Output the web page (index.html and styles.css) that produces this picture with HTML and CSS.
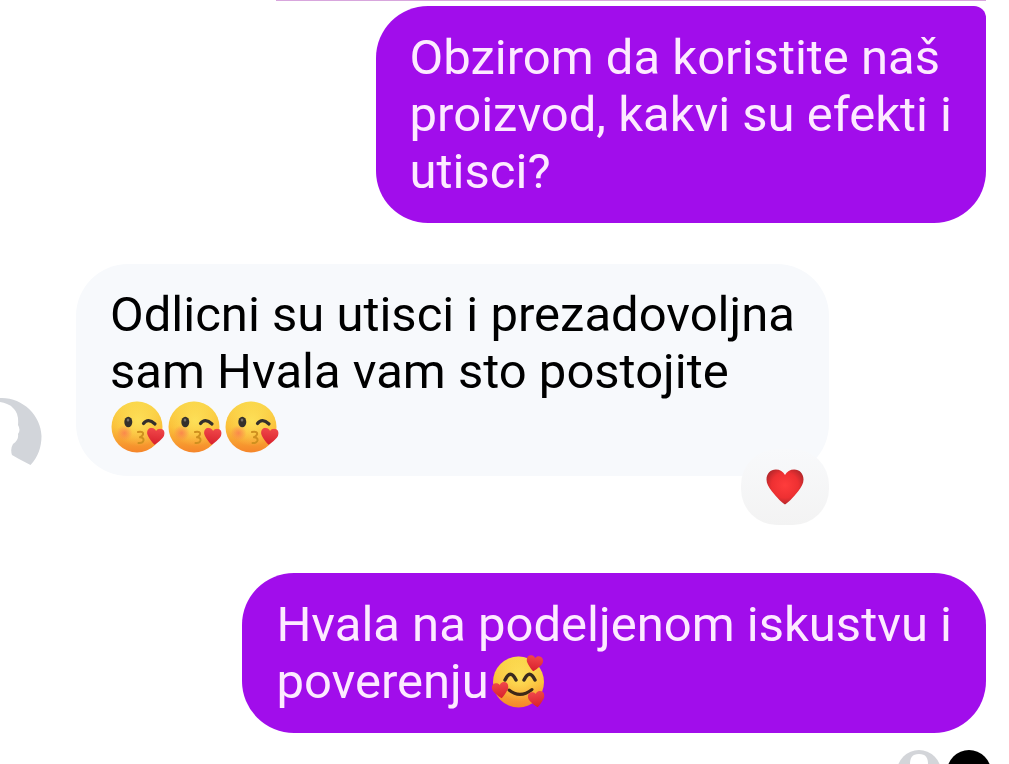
FILE: index.html
```
<!DOCTYPE html>
<html lang="sr">

<head>
    <meta charset="UTF-8">
    <meta name="viewport" content="width=device-width, initial-scale=1.0">
    <title>Chat</title>
    <link rel="stylesheet" href="styles.css">
</head>

<body>
    <!-- Emoji and gradients -->
    <svg class="defs" aria-hidden="true">
        <defs>
            <linearGradient id="face" x1="0" y1="0" x2="0" y2="1">
                <stop offset="0" stop-color="#f9d548" />
                <stop offset="0.5" stop-color="#fbc03a" />
                <stop offset="1" stop-color="#f5852a" />
            </linearGradient>
            <radialGradient id="glow" cx="0.52" cy="0.38" r="0.5">
                <stop offset="0" stop-color="#fde058" />
                <stop offset="1" stop-color="#fde058" stop-opacity="0" />
            </radialGradient>
            <radialGradient id="blush">
                <stop offset="0" stop-color="#fb7650" stop-opacity="0.75" />
                <stop offset="1" stop-color="#fb7650" stop-opacity="0" />
            </radialGradient>
            <radialGradient id="red" cx="0.5" cy="0.45" r="0.6">
                <stop offset="0" stop-color="#ff3c3c" />
                <stop offset="0.6" stop-color="#ee3032" />
                <stop offset="1" stop-color="#a8262a" />
            </radialGradient>
            <linearGradient id="small-red" x1="0" y1="0" x2="0" y2="1">
                <stop offset="0" stop-color="#f0484a" />
                <stop offset="1" stop-color="#d8202c" />
            </linearGradient>
            <symbol id="heart" viewBox="0 0 38 36">
                <path d="M19 35.500C16.500 34 11 29 6 22.500C2.500 18 .5 14.500 .5 10.500C.5 4.500 4.500 .5 9.800 .5C13.800 .5 17.300 2.500 19 6C20.700 2.500 24.200 .5 28.200 .5C33.500 .5 37.500 4.500 37.500 10.500C37.500 14.500 35.500 18 32 22.500C27 29 21.500 34 19 35.500Z" />
            </symbol>
            <symbol id="kiss" viewBox="0 0 57 57">
                <circle cx="27" cy="27" r="25.500" fill="url(#face)" />
                <circle cx="27" cy="27" r="25.500" fill="url(#glow)" />
                <circle cx="14.500" cy="33" r="8" fill="url(#blush)" />
                <ellipse cx="18.300" cy="22" rx="4" ry="5.200" fill="#34302c" />
                <ellipse cx="18" cy="20" rx="1.300" ry="1.500" fill="#77706a" />
                <path d="M33.500 23.500Q38 17.500 45 24" fill="none" stroke="#34302c" stroke-width="3.200" stroke-linecap="round" />
                <path d="M28 32Q34 31 33 34.500Q32 36.500 30 37.300Q34 37.800 33.500 40.500Q32.500 43.500 28.500 43" fill="none" stroke="#cf901f" stroke-width="2" stroke-linecap="round" stroke-linejoin="round" />
                <use href="#heart" x="36.500" y="28" width="18" height="17" fill="url(#small-red)" transform="rotate(6 45 36)" />
            </symbol>
            <symbol id="love" viewBox="0 0 57 57">
                <circle cx="29.500" cy="29" r="25.500" fill="url(#face)" />
                <circle cx="29.500" cy="29" r="25.500" fill="url(#glow)" />
                <path d="M16 27Q21.500 15.500 27 27M35 27Q40.500 15.500 46 27" fill="none" stroke="#3a2b20" stroke-width="3.400" stroke-linecap="round" stroke-linejoin="round" />
                <path d="M20 37Q31 46 43 36.500" fill="none" stroke="#3f2818" stroke-width="3" stroke-linecap="round" />
                <use href="#heart" x="37" y="2" width="17" height="17" fill="url(#small-red)" transform="rotate(8 45 10)" />
                <use href="#heart" x="3" y="29" width="17" height="17" fill="url(#small-red)" transform="rotate(-8 11 37)" />
                <use href="#heart" x="39" y="38" width="17" height="17" fill="url(#small-red)" transform="rotate(-8 47 46)" />
            </symbol>
        </defs>
    </svg>

    <main class="chat">
        <!-- End of the previous message -->
        <div class="previous"></div>

        <div class="row sent">
            <div class="bubble grouped">Obzirom da koristite naš<br>proizvod, kakvi su efekti i<br>utisci?</div>
        </div>

        <div class="row received">
            <svg class="avatar" viewBox="0 0 80 80" role="img" aria-label="Avatar">
                <path d="M30 3.200A38.500 38.500 0 0 1 38 2C60 1 79 19 79.500 40C79.500 51 76 61 68.500 69L57 63L50 59Q48 53 51 48Q57 44 56 38Q59 34 56 29Q57 18 52 13Q49 9 45 8Q39 5 30 6Z" fill="#d2d5da" />
            </svg>
            <div class="bubble">Odlicni su utisci i prezadovoljna<br>sam Hvala vam sto postojite<br><span class="emojis" role="img" aria-label="Tri poljupca"><svg class="emoji"><use href="#kiss" /></svg><svg class="emoji"><use href="#kiss" /></svg><svg class="emoji"><use href="#kiss" /></svg></span>
                <button class="reaction" aria-label="Srce">
                    <svg class="reaction-heart"><use href="#heart" fill="url(#red)" /></svg>
                </button>
            </div>
        </div>

        <div class="row sent">
            <div class="bubble">Hvala na podeljenom iskustvu i<br>poverenju<svg class="emoji" role="img" aria-label="Zaljubljen"><use href="#love" /></svg></div>
        </div>

        <!-- Seen by -->
        <div class="seen">
            <svg class="seen-avatar" viewBox="0 0 44 44">
                <circle cx="22" cy="22" r="22" fill="#d3d5d9" />
                <path d="M22 4C15 4 13 8 13 14C13 22 15 26 22 26C29 26 31 22 31 14C31 8 29 4 22 4Z" fill="#ffffff" />
            </svg>
            <svg class="seen-avatar" viewBox="0 0 44 44">
                <circle cx="22" cy="22" r="22" fill="#000000" />
            </svg>
        </div>
    </main>
</body>

</html>
```

FILE: styles.css
```
* {
    box-sizing: border-box;
}

body {
    font-family: Roboto, sans-serif;
    margin: 0;
    background-color: #ffffff;
    color: #000000;
}

.defs {
    position: absolute;
    width: 0;
    height: 0;
}
/* Chat */

.chat {
    display: flex;
    flex-direction: column;
    height: 100vh;
    overflow: hidden;
    padding-right: 23px;
}

.chat > * {
    flex-shrink: 0;
}

.previous {
    align-self: flex-end;
    width: 72%;
    height: 1px;
    margin-bottom: 5px;
    background-color: #d8a6dd;
}

.row {
    display: flex;
    align-items: flex-end;
}
/* Bubbles */

.bubble {
    position: relative;
    padding: 23px 34px;
    border-radius: 52px;
    font-size: 49px;
    line-height: 57px;
    white-space: nowrap;
}

.sent {
    justify-content: flex-end;
}

.sent .bubble {
    background-color: #a10deb;
    color: #fdeaff;
}

.sent .grouped {
    border-top-right-radius: 12px;
}

.received {
    gap: 34px;
    margin: 41px 0 97px -38px;
}

.received .bubble {
    padding: 22px 34px 19px;
    background-color: #f7f9fc;
}

.avatar {
    width: 80px;
    height: 80px;
}

.emojis {
    display: inline-flex;
    vertical-align: top;
}

.emoji {
    width: 57px;
    height: 57px;
    vertical-align: top;
}
/* Reaction */

.reaction {
    position: absolute;
    right: 0;
    bottom: -49px;
    display: flex;
    justify-content: center;
    align-items: center;
    width: 88px;
    height: 76px;
    padding: 0;
    border: none;
    border-radius: 36px;
    background: linear-gradient(#f8f9fb, #f3f3f3);
    cursor: pointer;
}

.reaction-heart {
    width: 38px;
    height: 36px;
}
/* Seen */

.seen {
    display: flex;
    justify-content: flex-end;
    gap: 6px;
    margin: 17px -5px 0 0;
}

.seen-avatar {
    width: 44px;
    height: 44px;
}
```
